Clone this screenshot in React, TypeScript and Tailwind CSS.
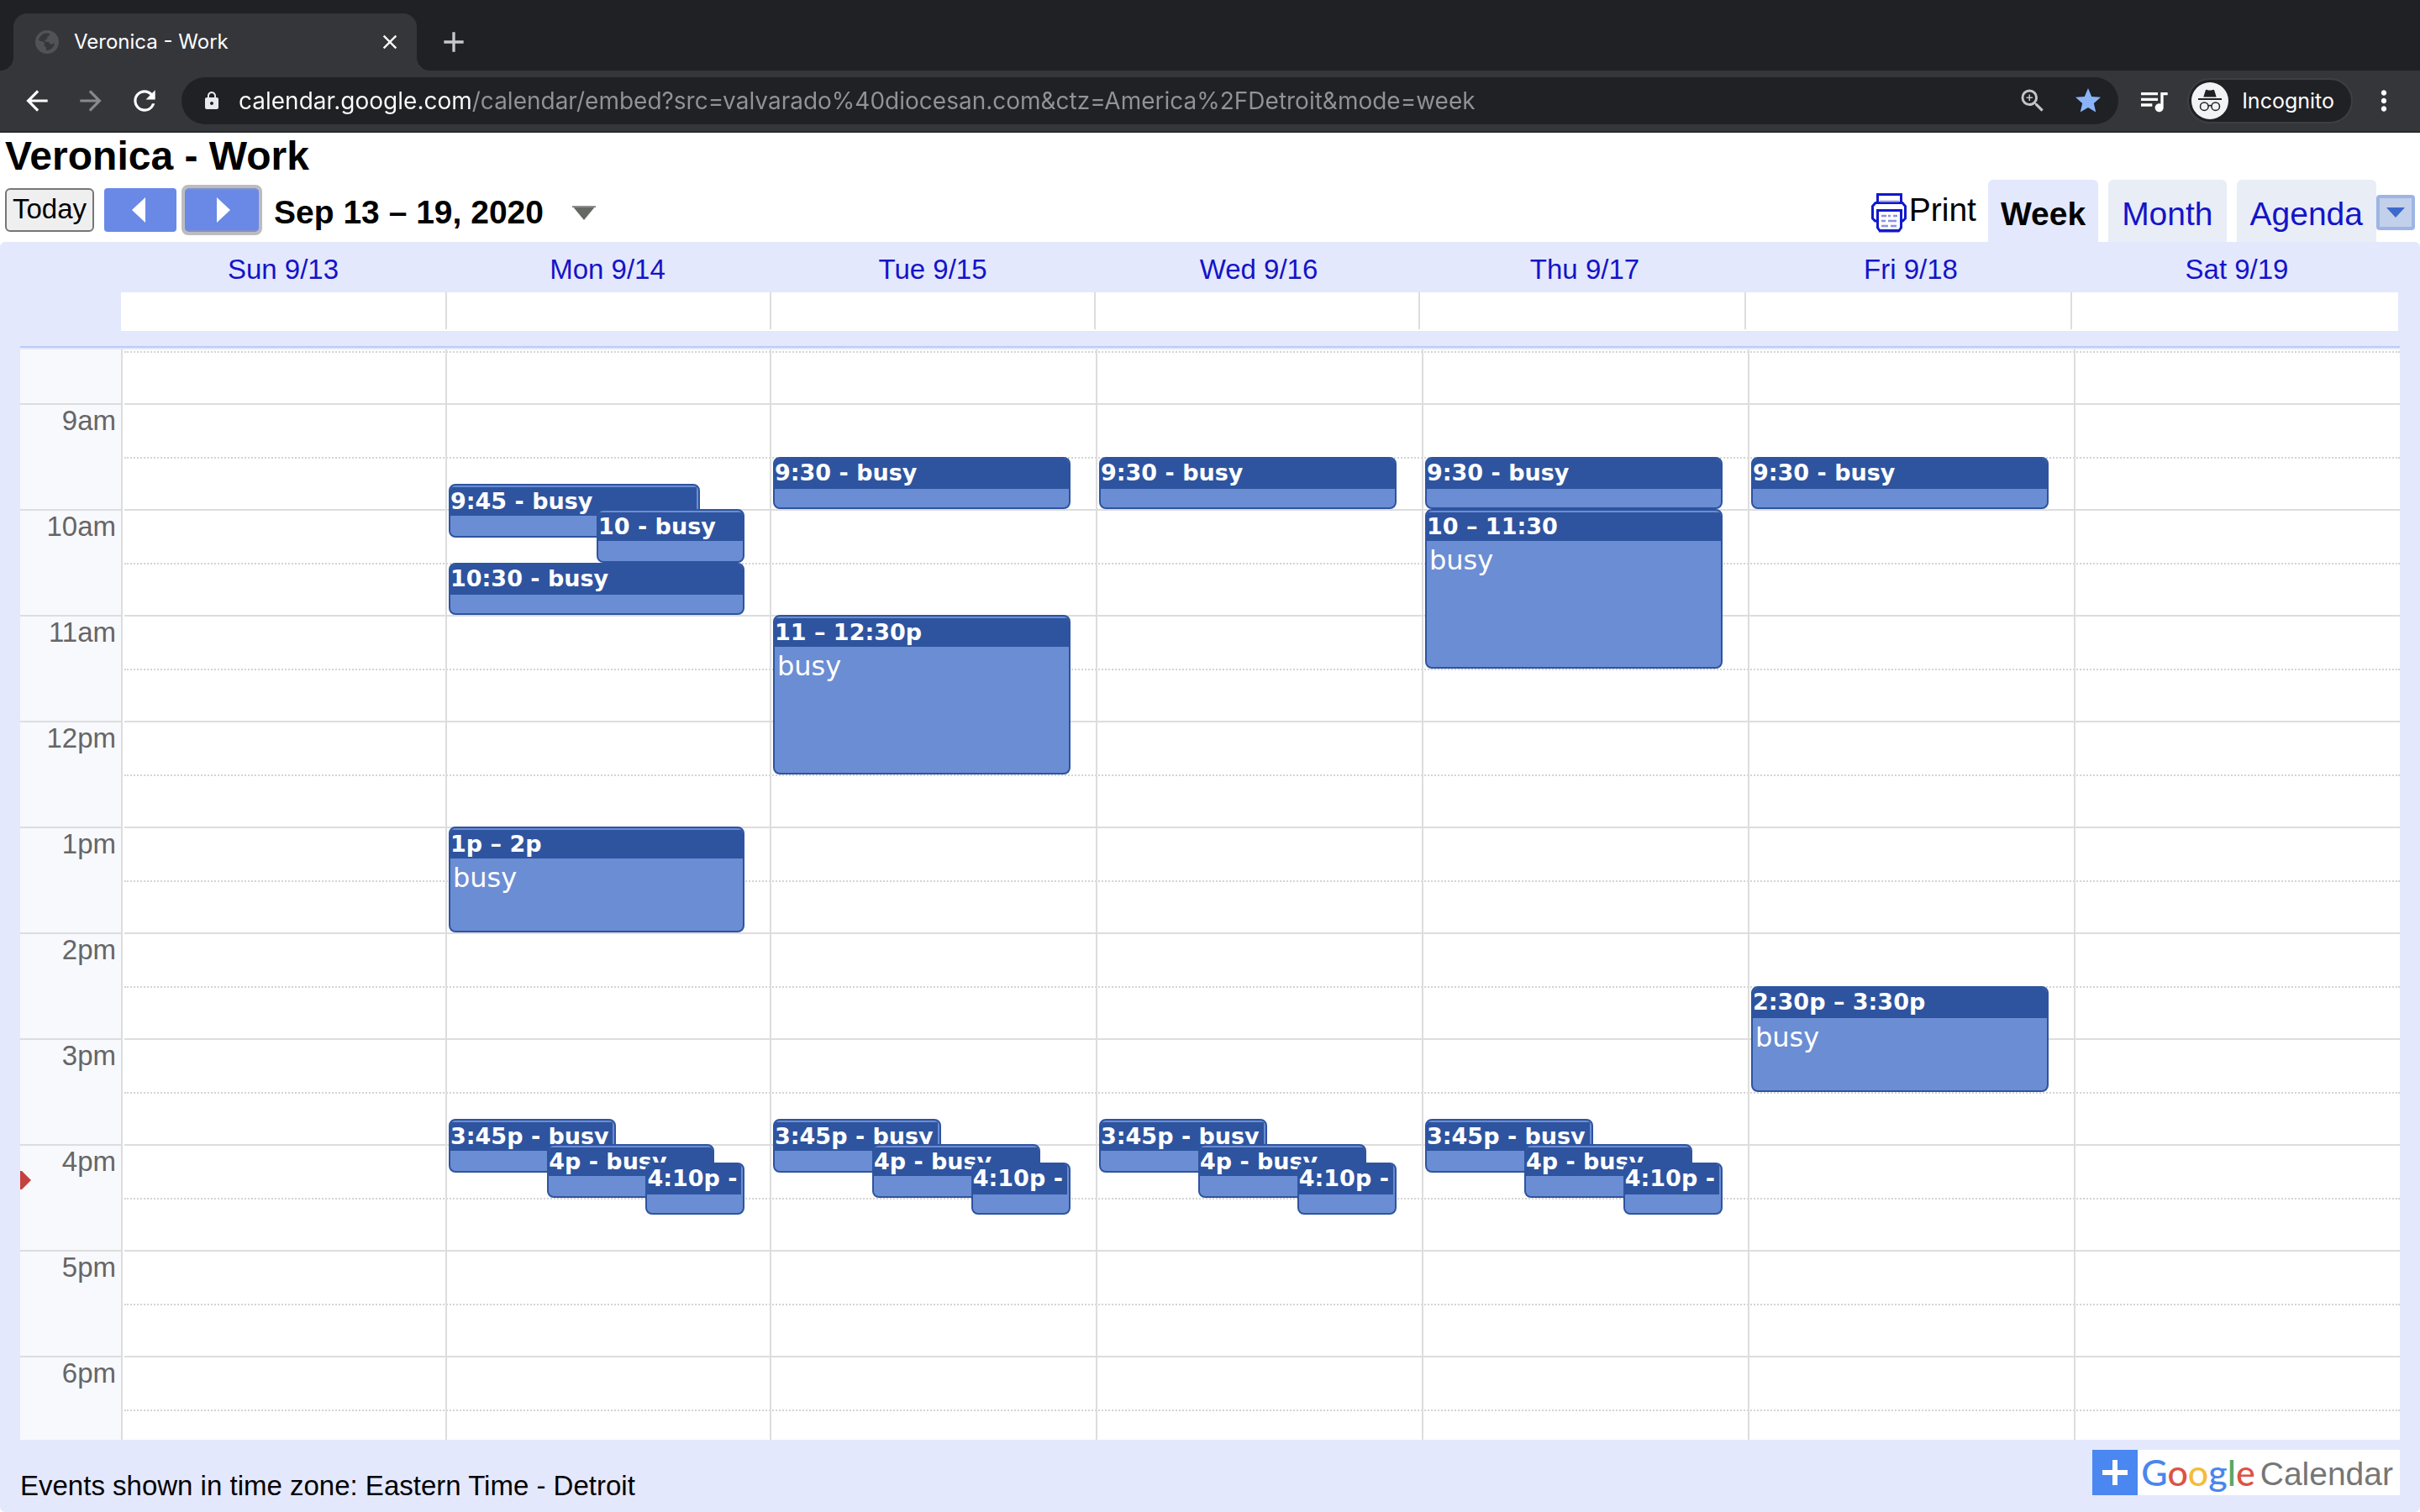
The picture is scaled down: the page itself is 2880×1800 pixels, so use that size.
import React from "react";
import {
  MdArrowBack,
  MdArrowForward,
  MdRefresh,
  MdLock,
  MdOutlineZoomIn,
  MdStar,
  MdQueueMusic,
  MdMoreVert,
  MdClose,
  MdAdd,
} from "react-icons/md";

const HOUR = 126;
const GRID_START = 64;
const FIRST_HOUR = 9;

type CalendarEvent = {
  title: string;
  body?: string;
  start: number;
  height: number;
  left?: number;
  width?: number;
  insetTop?: boolean;
  insetSide?: boolean;
};

const afternoon: CalendarEvent[] = [
  { title: "3:45p - busy", start: 15.75, height: 64, width: 56.6, insetTop: true, insetSide: true },
  { title: "4p - busy", start: 16, height: 64, left: 33.3, width: 56.6, insetTop: true },
  { title: "4:10p -", start: 16.17, height: 62, left: 66.6, width: 33.4, insetSide: true },
];

const nineThirty: CalendarEvent = { title: "9:30 - busy", start: 9.5, height: 62 };

const days: { label: string; events: CalendarEvent[] }[] = [
  { label: "Sun 9/13", events: [] },
  {
    label: "Mon 9/14",
    events: [
      { title: "9:45 - busy", start: 9.75, height: 64, width: 85, insetTop: true, insetSide: true },
      { title: "10 - busy", start: 10, height: 64, left: 50, width: 50, insetTop: true },
      { title: "10:30 - busy", start: 10.5, height: 62 },
      { title: "1p – 2p", body: "busy", start: 13, height: 126, insetTop: true },
      ...afternoon,
    ],
  },
  {
    label: "Tue 9/15",
    events: [
      nineThirty,
      { title: "11 – 12:30p", body: "busy", start: 11, height: 190, insetTop: true },
      ...afternoon,
    ],
  },
  { label: "Wed 9/16", events: [nineThirty, ...afternoon] },
  {
    label: "Thu 9/17",
    events: [
      nineThirty,
      { title: "10 – 11:30", body: "busy", start: 10, height: 190, insetTop: true },
      ...afternoon,
    ],
  },
  {
    label: "Fri 9/18",
    events: [nineThirty, { title: "2:30p – 3:30p", body: "busy", start: 14.5, height: 126 }],
  },
  { label: "Sat 9/19", events: [] },
];

const hours = ["9am", "10am", "11am", "12pm", "1pm", "2pm", "3pm", "4pm", "5pm", "6pm"];

// Event tops sit on an even pixel so that borders line up with the 2px grid rules.
function eventTop(e: CalendarEvent) {
  return Math.ceil((GRID_START + (e.start - FIRST_HOUR) * HOUR) / 2) * 2;
}

function GlobeIcon() {
  return (
    <svg viewBox="0 0 28 28" className="size-7 shrink-0" aria-hidden="true">
      <circle cx="14" cy="14" r="14" fill="#515256" />
      <path
        d="M13 3.5c2.500-.3 4 .5 4.500 1.500-.8 1.800-2.300 1.500-3 2.500s.5 2.500-.8 3.200c-1.300.6-2.500.5-2.500 1.800 0 1.500 2.500 1.200 4.500 1.600 1.800.5 1 2.400 2.800 2.600 1.500.2 2.500-1.200 4.500-1-.5 3-2.500 6-6 7.500-1.500.6-3 .8-4 .8v-3c-.3-1.700-2.300-1-2.600-3-.2-1.500 1.200-2.200.6-3.300C9.800 13 6 13.500 4 12c.8-4.500 4.500-8.100 9-8.500z"
        fill="#36373b"
      />
    </svg>
  );
}

function IncognitoIcon() {
  return (
    <svg viewBox="0 0 44 44" className="size-11 shrink-0" aria-hidden="true">
      <circle cx="22" cy="22" r="22" fill="#f1f3f4" />
      <path d="M14.300 17.500 16.800 9.600c.3-.8 1-1 1.700-.8l1.500.8h4l1.500-.8c.7-.2 1.400 0 1.700.8l2.500 7.900z" fill="#202124" />
      <rect x="8" y="19" width="28" height="2" fill="#202124" />
      <g fill="none" stroke="#202124" strokeWidth="1.500">
        <circle cx="15.300" cy="28.700" r="4.800" />
        <circle cx="28.700" cy="28.700" r="4.800" />
        <path d="M20 28.300c1.300-.9 2.700-.9 4 0" />
      </g>
    </svg>
  );
}

function PrinterIcon() {
  return (
    <svg viewBox="0 0 44 48" className="h-12 w-11 shrink-0" aria-hidden="true">
      <g fill="#fff" stroke="#1119cc" strokeWidth="3">
        <path d="M8.500 14V2.500h28V14" />
        <path d="M8 34H5.500L2.500 31V16.500L6 12.500h32l3.500 4V31l-3 3H36" />
        <path d="M8.500 21.500h28V42l-2.500 3.500H11L8.500 42z" />
      </g>
      <path d="M11 10.500h23" stroke="#a9adeb" strokeWidth="2" />
      <path d="M10 46h24" stroke="#1119cc" strokeWidth="3" />
      <g stroke="#8d91e3" strokeWidth="2.500">
        <path d="M13 28h6M21 28h3M27 28h5M13 34h5M21 34h10M13 40h8M24 40h7" />
      </g>
    </svg>
  );
}

function BrowserChrome() {
  return (
    <header className="bg-[#202124] font-[Roboto,sans-serif] text-white">
      <div className="flex h-[84px] items-end">
        <span className="size-4 bg-[radial-gradient(circle_at_top_left,transparent_16px,#35363a_16px)]" />
        <div className="flex h-[68px] w-[480px] items-center rounded-t-2xl bg-[#35363a] pr-[18px] pl-[26px]">
          <GlobeIcon />
          <span className="ml-[18px] flex-1 font-[Inter,sans-serif] text-2xl">Veronica - Work</span>
          <button aria-label="Close tab">
            <MdClose className="size-7" />
          </button>
        </div>
        <span className="size-4 bg-[radial-gradient(circle_at_top_right,transparent_16px,#35363a_16px)]" />
        <button aria-label="New tab" className="ml-2 flex h-[68px] items-center text-[#c6c8cb]">
          <MdAdd className="size-10" />
        </button>
      </div>
      <div className="flex h-[74px] items-center border-b-2 border-[#28292c] bg-[#35363a] pl-[25px]">
        <button aria-label="Back" className="mr-[26px]">
          <MdArrowBack className="size-[38px]" />
        </button>
        <button aria-label="Forward" className="mr-[26px] text-[#88898c]">
          <MdArrowForward className="size-[38px]" />
        </button>
        <button aria-label="Reload" className="mr-[25px]">
          <MdRefresh className="size-[38px]" />
        </button>
        <div className="flex h-14 flex-1 items-center rounded-full bg-[#202124] pr-[18px] pl-6">
          <MdLock className="size-6 text-[#e8eaed]" />
          <input
            aria-label="Address"
            readOnly
            value="calendar.google.com/calendar/embed?src=valvarado%40diocesan.com&ctz=America%2FDetroit&mode=week"
            className="ml-5 h-10 flex-1 bg-[linear-gradient(90deg,#ffffff_277px,#919396_277px)] bg-clip-text font-[Inter,sans-serif] text-[28px] text-transparent outline-none"
          />
          <button aria-label="Zoom" className="mr-[30px] text-[#c3c5c8]">
            <MdOutlineZoomIn className="size-9" />
          </button>
          <button aria-label="Bookmark" className="text-[#8ab4f8]">
            <MdStar className="size-9" />
          </button>
        </div>
        <button aria-label="Media" className="ml-[22px]">
          <MdQueueMusic className="size-10" />
        </button>
        <button className="ml-5 flex h-[54px] items-center rounded-full border-2 border-[#3e3f44] bg-[#202124] pr-5 pl-[3px]">
          <IncognitoIcon />
          <span className="ml-4 pt-0.5 font-[Inter,sans-serif] text-[25px]">Incognito</span>
        </button>
        <button aria-label="Menu" className="mr-6 ml-[18px]">
          <MdMoreVert className="size-[38px]" />
        </button>
      </div>
    </header>
  );
}

function Toolbar() {
  return (
    <div className="flex h-[74px] justify-between pr-1.5 pl-1.5">
      <div className="mt-2.5 flex h-[52px] items-center">
        <button className="h-[52px] rounded-md border-2 border-[#767676] bg-[#efefef] px-[7px] pb-0.5 text-[33px] leading-9">
          Today
        </button>
        <button aria-label="Previous week" className="ml-3 flex h-[52px] w-[86px] items-center justify-center rounded-sm bg-[#6a89e6] pr-1">
          <svg viewBox="0 0 16 30" className="h-[30px] w-4">
            <path d="M16 0v30L0 15z" fill="#fff" />
          </svg>
        </button>
        <button
          aria-label="Next week"
          className="ml-2.5 flex h-[52px] w-[88px] items-center justify-center rounded-sm border-y-2 border-[#8290c8] bg-[#6a89e6] pl-1 outline-4 outline-[#bcbcc0]"
        >
          <svg viewBox="0 0 16 30" className="h-[30px] w-4">
            <path d="M0 0v30L16 15z" fill="#fff" />
          </svg>
        </button>
        <span className="ml-[18px] pt-1.5 text-[39px] leading-[44px] font-bold">Sep 13 – 19, 2020</span>
        <button aria-label="Choose date" className="ml-[34px] pt-1.5">
          <svg viewBox="0 0 28 17" className="h-[17px] w-7">
            <path d="M0 0h28L14 17z" fill="#666864" />
            <path d="M0 1h28" stroke="#8b8d89" strokeWidth="2" />
          </svg>
        </button>
      </div>
      <div className="flex items-start">
        <a href="#print" className="mt-2.5 mr-3.5 flex h-[52px] items-center text-[39px] leading-[44px]">
          <span className="mr-0.5 pt-1.5">
            <PrinterIcon />
          </span>
          Print
        </a>
        <nav className="flex gap-3 text-[39px] leading-[44px]">
          <a href="#week" className="flex h-[74px] items-center rounded-t-md bg-[#e4e8fd] px-[15px] pt-2 font-bold">
            Week
          </a>
          <a href="#month" className="flex h-[74px] items-center rounded-t-md bg-[#e8edf6] px-4 pt-2 text-[#1414c8]">
            Month
          </a>
          <a href="#agenda" className="flex h-[74px] items-center rounded-t-md bg-[#e8edf6] px-4 pt-2 text-[#1414c8]">
            Agenda
          </a>
        </nav>
        <button aria-label="Calendars" className="mt-[18px] flex h-[42px] w-[46px] items-center justify-center rounded-sm border-4 border-[#9db5e4] bg-[#c3d0eb]">
          <svg viewBox="0 0 22 12" className="h-3 w-[22px]">
            <path d="M0 0h22L11 12z" fill="#3c69cc" />
          </svg>
        </button>
      </div>
    </div>
  );
}

function EventBox({ event }: { event: CalendarEvent }) {
  return (
    <button
      className="absolute flex flex-col overflow-hidden rounded-lg border-2 border-[#2e549f] bg-[#6b8dd4] text-left font-['DejaVu_Sans',sans-serif] text-white"
      style={{
        top: eventTop(event),
        height: event.height,
        left: `${event.left ?? 0}%`,
        width: `${event.width ?? 100}%`,
      }}
    >
      <span className={event.insetTop ? "block w-full pt-0.5" : "block w-full"}>
        <span className={event.insetSide ? "block pr-0.5" : "block"}>
          <span
            className={
              event.insetTop
                ? "block h-[34px] bg-[#2e549f] text-[27px] leading-[34px] font-bold whitespace-nowrap"
                : "block h-9 bg-[#2e549f] text-[27px] leading-[34px] font-bold whitespace-nowrap"
            }
          >
            {event.title}
          </span>
        </span>
      </span>
      {event.body && <span className="mt-1 pl-[3px] text-[32px] leading-[38px]">{event.body}</span>}
    </button>
  );
}

function WeekView() {
  return (
    <main className="rounded-md bg-[#e4e8fd]">
      <div className="grid grid-cols-[386fr_386fr_388fr_388fr_388fr_388fr_388fr] pr-6 pl-36">
        {days.map((d) => (
          <a key={d.label} href="#day" className="h-[60px] pt-[15px] text-center text-[33px] leading-9 text-[#1414c8]">
            {d.label}
          </a>
        ))}
      </div>
      <div className="pr-[26px] pl-36">
        <div className="grid h-[46px] grid-cols-[386fr_386fr_386fr_386fr_388fr_388fr_390fr] bg-white pb-0.5">
          {days.map((d, i) => (
            <div key={d.label} className={i ? "border-l-2 border-[#ddd]" : ""} />
          ))}
        </div>
      </div>
      <div className="mx-6 mt-[18px] h-1 border-t-2 border-[#bccbfb]" />
      <div className="mx-6 flex bg-white">
        <div className="relative w-[120px] bg-[#f8f9fd] text-right text-[33px] leading-9 text-[#666]">
          <div className="h-16" />
          {hours.map((h, i) => (
            <div
              key={h}
              className={
                i === hours.length - 1
                  ? "h-[100px] border-t-2 border-[#ddd] pt-px pr-1.5"
                  : "h-[126px] border-t-2 border-[#ddd] pt-px pr-1.5"
              }
            >
              {h}
            </div>
          ))}
          <svg viewBox="0 0 13 22" className="absolute top-[978px] left-0 h-[22px] w-[13px]" aria-hidden="true">
            <path d="M0 0l2 0L13 11 2 22H0z" fill="#c4413d" />
          </svg>
        </div>
        <div className="relative flex-1">
          <div className="pl-1">
            <div className="h-16 pt-0.5">
              <div className="border-t-2 border-dotted border-[#d4d4d4]" />
            </div>
            {hours.map((h, i) => (
              <div
                key={h}
                className={
                  i === hours.length - 1
                    ? "h-[100px] border-t-2 border-[#ddd] pt-[62px]"
                    : "h-[126px] border-t-2 border-[#ddd] pt-[62px]"
                }
              >
                <div className="border-t-2 border-dotted border-[#d4d4d4]" />
              </div>
            ))}
          </div>
          <div className="absolute inset-0 grid grid-cols-[386fr_386fr_388fr_388fr_388fr_388fr_388fr]">
            {days.map((d) => (
              <div key={d.label} className="border-l-2 border-[#ddd] pr-[30px] pl-0.5">
                <div className="relative h-full">
                  {d.events.map((e) => (
                    <EventBox key={e.title} event={e} />
                  ))}
                </div>
              </div>
            ))}
          </div>
        </div>
      </div>
      <footer className="flex h-[86px] items-start justify-between px-6">
        <p className="pt-[37px] text-[33px] leading-9">Events shown in time zone: Eastern Time - Detroit</p>
        <a href="#google-calendar" className="mt-3 flex h-[54px] items-center bg-white pr-2">
          <span className="flex size-[54px] items-center justify-center bg-[#4a87f0]">
            <svg viewBox="0 0 30 30" className="size-[30px]">
              <path d="M15 0v30M0 15h30" stroke="#fff" strokeWidth="6" />
            </svg>
          </span>
          <span className="ml-1 font-[Lato,sans-serif] text-[43px] leading-[54px] font-medium">
            <span className="text-[#4a86ee]">G</span>
            <span className="text-[#dc5345]">o</span>
            <span className="text-[#f4bd3a]">o</span>
            <span className="text-[#4a86ee]">g</span>
            <span className="text-[#5aa863]">l</span>
            <span className="text-[#dc5345]">e</span>
          </span>
          <span className="ml-1.5 pt-1 text-[39px] leading-[50px] text-[#767676]">Calendar</span>
        </a>
      </footer>
    </main>
  );
}

export default function App() {
  return (
    <div className="min-h-screen bg-white font-['Liberation_Sans',Arial,sans-serif] text-black">
      <BrowserChrome />
      <h1 className="pl-1.5 text-5xl leading-[56px] font-bold">Veronica - Work</h1>
      <Toolbar />
      <WeekView />
    </div>
  );
}
